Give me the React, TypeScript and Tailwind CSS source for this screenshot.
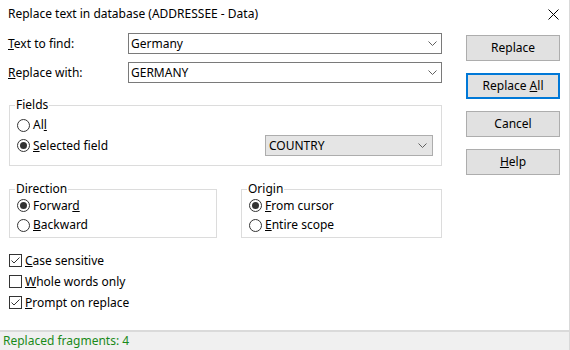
import React from 'react';

const font = "font-['Noto_Sans','Liberation_Sans',sans-serif]";

function Chevron() {
  return (
    <svg width="9" height="5" viewBox="0 0 9 5" className="shrink-0">
      <path d="M0.5 0.5 L4.5 4.5 L8.5 0.5" fill="none" stroke="#606060" strokeWidth="1" />
    </svg>
  );
}

function Radio({ checked, children }: { checked?: boolean; children: React.ReactNode }) {
  return (
    <div className="flex items-center gap-[3px]">
      <span className="w-[13px] h-[13px] rounded-full border border-[#333333] flex items-center justify-center shrink-0">
        {checked && <span className="w-[7px] h-[7px] rounded-full bg-[#333333]" />}
      </span>
      <span>{children}</span>
    </div>
  );
}

function Check({ checked, children }: { checked?: boolean; children: React.ReactNode }) {
  return (
    <div className="h-[21px] flex items-center gap-[3px] pl-[1px]">
      <span className="w-[13px] h-[13px] border border-[#333333] flex items-center justify-center shrink-0">
        {checked && (
          <svg width="11" height="11" viewBox="0 0 11 11">
            <path d="M1.5 5.5 L4 8 L9.5 2.5" fill="none" stroke="#333333" strokeWidth="1" />
          </svg>
        )}
      </span>
      <span>{children}</span>
    </div>
  );
}

function Button({ children, active }: { children: React.ReactNode; active?: boolean }) {
  return (
    <div
      className={
        active
          ? 'h-[26px] bg-[#e1e1e1] border-2 border-[#0078d7] flex items-center justify-center'
          : 'h-[26px] bg-[#e1e1e1] border border-[#adadad] flex items-center justify-center'
      }
    >
      <span>{children}</span>
    </div>
  );
}

function Combo({ value }: { value: string }) {
  return (
    <div className="h-[21px] flex-1 border border-[#7a7a7a] bg-white flex items-center pl-[2px] pr-[4px]">
      <span className="flex-1">{value}</span>
      <Chevron />
    </div>
  );
}

export default function App() {
  return (
    <div className={`${font} text-[12px] text-black w-[570px] h-[350px] bg-white flex flex-col border-r border-[#d9d9d9]`}>
      {/* title bar */}
      <div className="h-[28px] flex items-center pl-[8px] pr-[10px]">
        <span className="flex-1">Replace text in database (ADDRESSEE - Data)</span>
        <svg width="11" height="11" viewBox="0 0 11 11">
          <path d="M0.5 0.5 L10.5 10.5 M10.5 0.5 L0.5 10.5" stroke="#000" strokeWidth="1" />
        </svg>
      </div>

      <div className="flex flex-1 pl-[8px]">
        {/* left column */}
        <div className="w-[434px] flex flex-col">
          <div className="mt-[5px] h-[21px] flex items-center">
            <span className="w-[120px]"><u>T</u>ext to find:</span>
            <Combo value="Germany" />
          </div>
          <div className="mt-[8px] h-[21px] flex items-center">
            <span className="w-[120px]"><u>R</u>eplace with:</span>
            <Combo value="GERMANY" />
          </div>

          <fieldset className="mt-[15px] ml-[1px] border border-[#dcdcdc] pl-[7px] pr-[8px] pt-[3px] pb-[9px]">
            <legend className="-ml-[2px] px-[1px] leading-[14px]">Fields</legend>
            <div className="h-[20px] flex items-center">
              <Radio>Al<u>l</u></Radio>
            </div>
            <div className="h-[21px] flex items-center">
              <div className="flex-1">
                <Radio checked><u>S</u>elected field</Radio>
              </div>
              <div className="w-[168px] h-[21px] bg-[#e5e5e5] border border-[#adadad] flex items-center pl-[3px] pr-[5px]">
                <span className="flex-1">COUNTRY</span>
                <Chevron />
              </div>
            </div>
          </fieldset>

          <div className="mt-[16px] ml-[1px] flex gap-[24px]">
            <fieldset className="w-[208px] border border-[#dcdcdc] pl-[7px] pb-[2px]">
              <legend className="-ml-[2px] px-[1px] leading-[14px]">Direction</legend>
              <div className="h-[19px] flex items-center">
                <Radio checked>Forwar<u>d</u></Radio>
              </div>
              <div className="h-[20px] flex items-center">
                <Radio><u>B</u>ackward</Radio>
              </div>
            </fieldset>
            <fieldset className="flex-1 border border-[#dcdcdc] pl-[7px] pb-[2px]">
              <legend className="-ml-[2px] px-[1px] leading-[14px]">Origin</legend>
              <div className="h-[19px] flex items-center">
                <Radio checked><u>F</u>rom cursor</Radio>
              </div>
              <div className="h-[20px] flex items-center">
                <Radio><u>E</u>ntire scope</Radio>
              </div>
            </fieldset>
          </div>

          <div className="mt-[12px] flex flex-col">
            <Check checked><u>C</u>ase sensitive</Check>
            <Check><u>W</u>hole words only</Check>
            <Check checked><u>P</u>rompt on replace</Check>
          </div>
        </div>

        {/* right column */}
        <div className="ml-[24px] w-[94px] mt-[7px] flex flex-col gap-[12px]">
          <Button>Replace</Button>
          <Button active>Replace <u>A</u>ll</Button>
          <Button>Cancel</Button>
          <Button><u>H</u>elp</Button>
        </div>
      </div>

      {/* status bar */}
      <div className="h-[20px] border-t-2 border-[#dadada] bg-[#f0f0f0] flex items-center pl-[3px] text-[#1a8a1a]">
        Replaced fragments: 4
      </div>
    </div>
  );
}
